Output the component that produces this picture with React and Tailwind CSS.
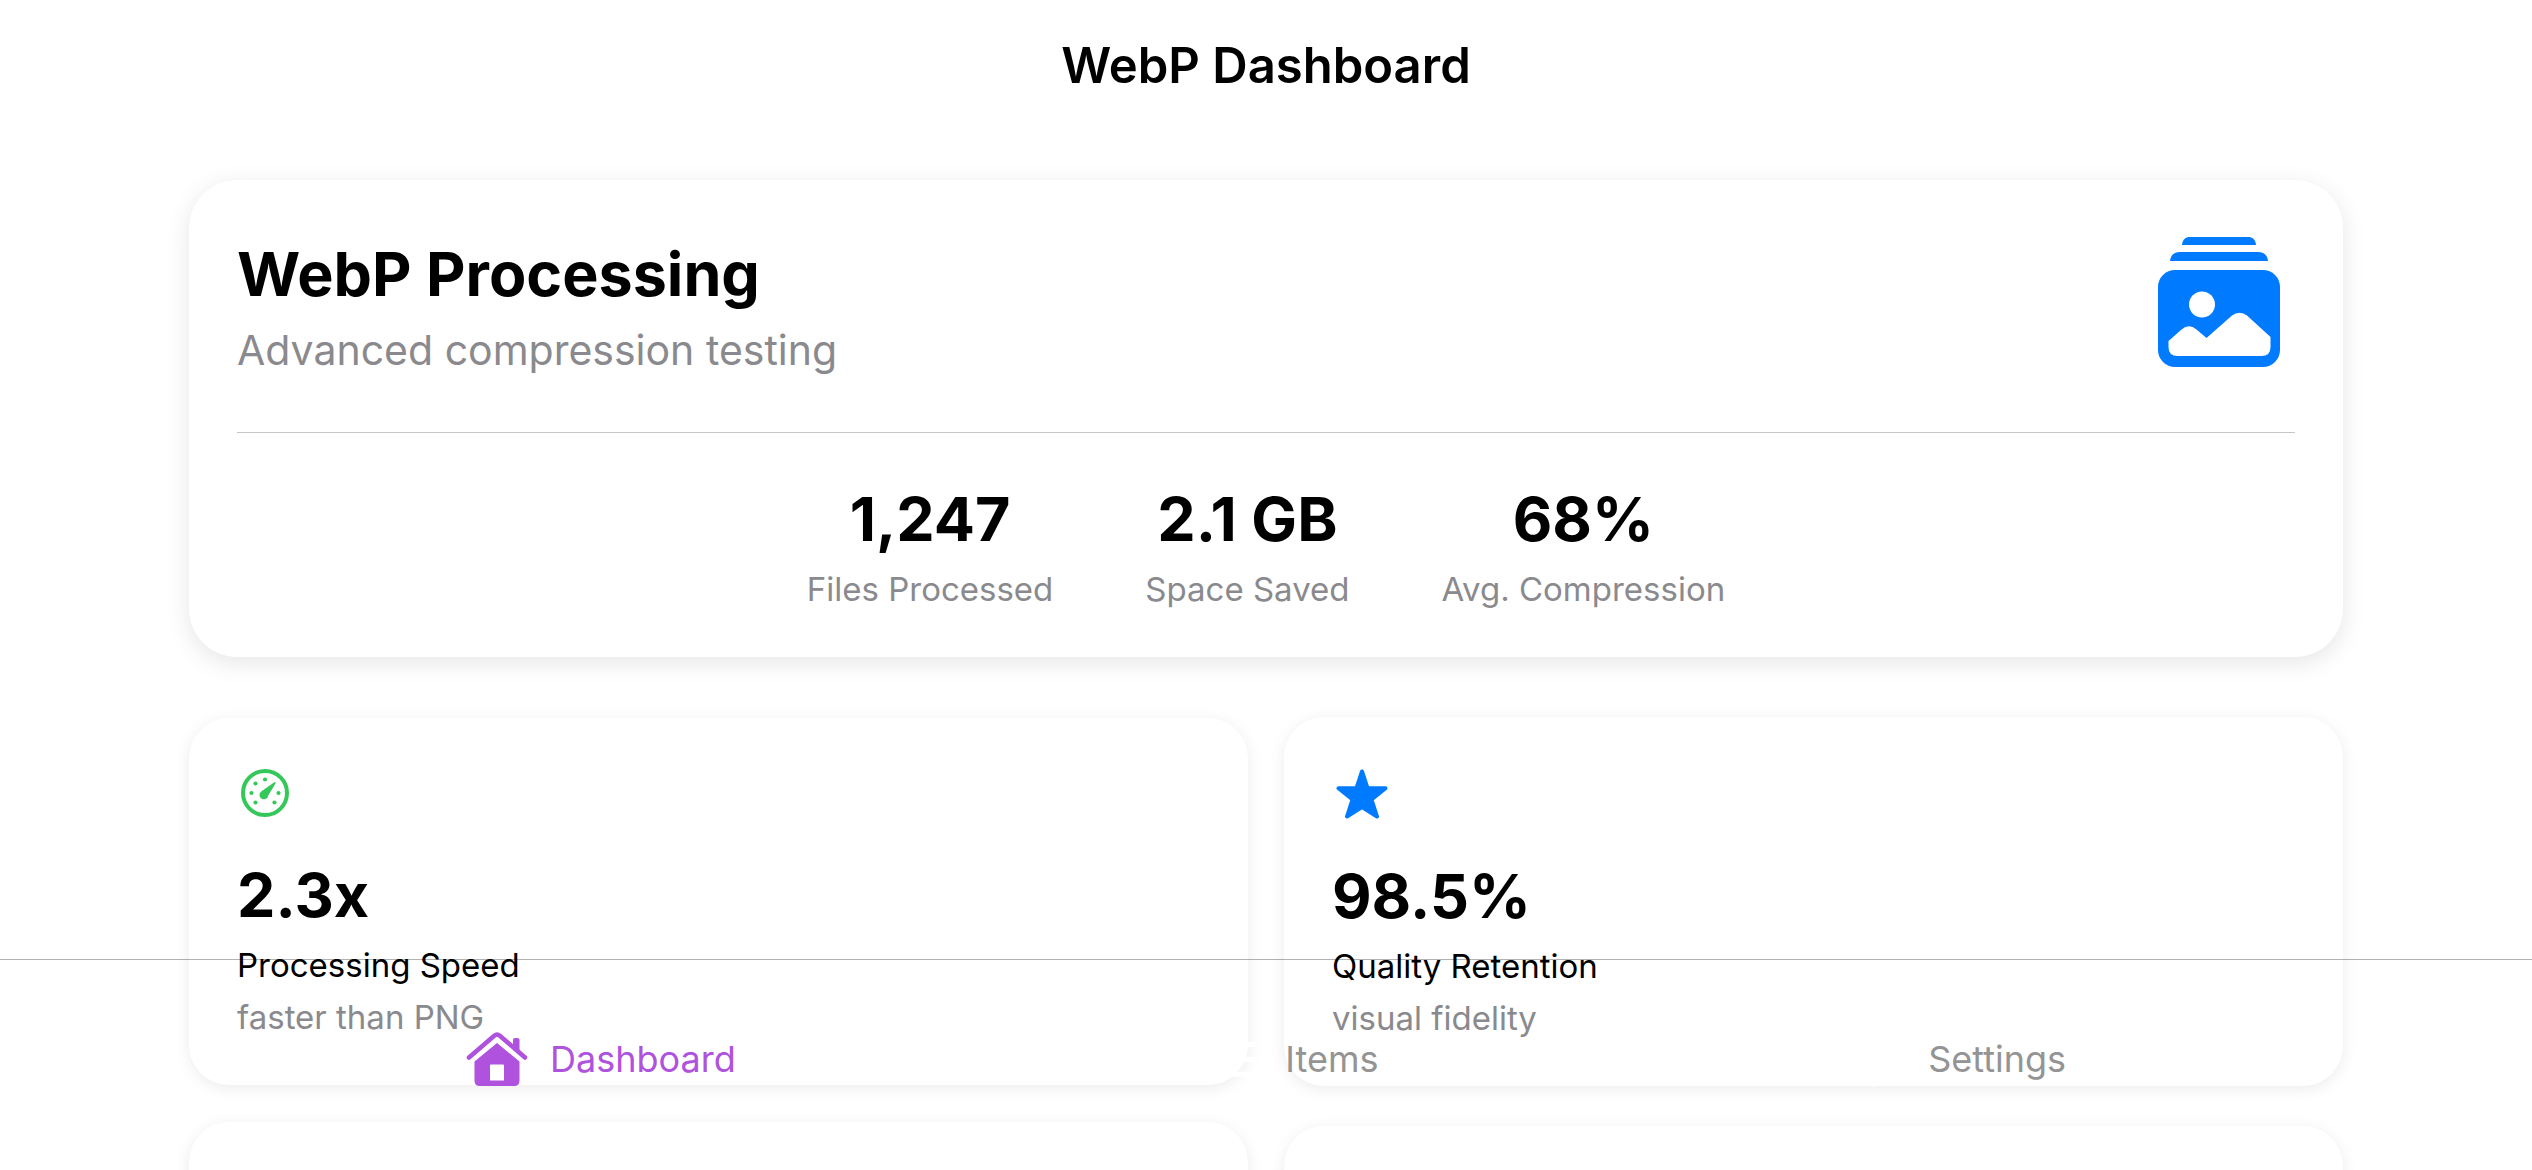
const cardShadow = 'shadow-[0_6px_24px_rgba(0,0,0,0.1)]';

function PhotoStackIcon() {
  return (
    <svg width="124" height="132" viewBox="0 0 124 132" aria-hidden="true" className="block">
      <g fill="#007aff">
        <path d="M25 9C25.500 3.500 28.500 1 33 1H91C95.500 1 98.500 3.500 99 9Z" />
        <path d="M13 25C13.500 19.500 17 16 23 16H101C107 16 110.500 19.500 111 25Z" />
        <rect x="1" y="34" width="122" height="97" rx="17" />
      </g>
      <circle cx="45" cy="68.500" r="13" fill="#fff" />
      <path d="M11.500 105L24.500 93.500Q32 87 39.500 93.500L49.500 102L75 79.500Q82.500 74 90 79.500L113.500 101V111Q113.500 120 104.500 120H20.500Q11.500 120 11.500 111Z" fill="#fff" />
    </svg>
  );
}

function GaugeIcon() {
  const dots = [[24, 10.500], [14.500, 14.500], [10.500, 24], [37.500, 24], [14.500, 33.500], [33.500, 33.500]];
  return (
    <svg width="48" height="48" viewBox="0 0 48 48" aria-hidden="true" className="block" fill="#34c759">
      <circle cx="24" cy="24" r="22" fill="none" stroke="#34c759" strokeWidth="4" />
      {dots.map(([x, y]) => (
        <circle key={`${x}-${y}`} cx={x} cy={y} r="2.100" />
      ))}
      <path d="M33.300 13.200Q35 12.600 34.500 14.400L27.200 26.400A4.400 4.400 0 1 1 20.200 22.400Z" />
    </svg>
  );
}

function StarIcon() {
  return (
    <svg width="52" height="50" viewBox="0 0 52 50" aria-hidden="true" className="block">
      <path
        d="M26 2.500L31.500 19.200H49.500L35.500 30.500L41 47.500L26 38L11 47.500L16.500 30.500L2.500 19.200H20.500Z"
        fill="#007aff"
        stroke="#007aff"
        strokeWidth="4"
        strokeLinejoin="round"
      />
    </svg>
  );
}

function HouseIcon() {
  return (
    <svg width="62" height="54" viewBox="0 0 62 54" aria-hidden="true" className="block">
      <path d="M3 25.500L28.500 3.500Q31 1.500 33.500 3.500L59 25.500" fill="none" stroke="#af52de" strokeWidth="4.500" strokeLinecap="round" />
      <path d="M47 18V8Q47 6 49 6H51.500Q53.500 6 53.500 8V22Z" fill="#af52de" />
      <path
        fillRule="evenodd"
        d="M31 11L53.500 29.500V48.500Q53.500 54 48 54H14Q8.500 54 8.500 48.500V29.500ZM25 32.500Q24 32.500 24 33.500V48.500H38V33.500Q38 32.500 37 32.500Z"
        fill="#af52de"
      />
    </svg>
  );
}

function ListIcon() {
  return (
    <svg width="62" height="54" viewBox="0 0 62 54" aria-hidden="true" className="block" fill="none" stroke="#fff" strokeWidth="5" strokeLinecap="round">
      <path d="M20 12.500H54M20 27.500H54M20 42.500H54M6 12.500H8M6 27.500H8M6 42.500H8" />
    </svg>
  );
}

function GearIcon() {
  return (
    <svg width="62" height="54" viewBox="0 0 62 54" aria-hidden="true" className="block overflow-visible" fill="none" stroke="#fff" strokeWidth="4">
      <circle cx="31" cy="27" r="21" />
      <circle cx="31" cy="27" r="7" />
      <circle cx="31" cy="27" r="25" strokeWidth="6" strokeDasharray="4 5.820" />
    </svg>
  );
}

const stats = [
  { value: '1,247', label: 'Files Processed' },
  { value: '2.1 GB', label: 'Space Saved' },
  { value: '68%', label: 'Avg. Compression' },
];

function MetricCard({ icon, value, label, note, tall }) {
  return (
    <article className={`rounded-[40px] bg-white px-12 pb-12 ${tall ? 'pt-[53px]' : 'pt-[51px]'} shadow-[0_3px_16px_rgba(0,0,0,0.08)]`}>
      <div className="flex h-12 items-center pl-1">{icon}</div>
      <p className="mt-11 text-[61px] leading-[68px] font-bold">{value}</p>
      <h3 className="mt-4 text-[33px] leading-10">{label}</h3>
      <p className="mt-3 text-[33px] leading-10 text-[#8a8a8e]">{note}</p>
    </article>
  );
}

function Tab({ icon, label, active }) {
  return (
    <button type="button" className={`flex items-center gap-[22px] text-[36px] leading-[54px] ${active ? 'text-[#af52de]' : 'text-[#949494]'}`}>
      {icon}
      {label}
    </button>
  );
}

export default function App() {
  return (
    <div className="relative h-screen overflow-hidden bg-white font-[Inter,'Liberation_Sans',sans-serif] text-black">
      <header className="flex h-[132px] items-center justify-center">
        <h1 className="text-[49px] leading-[60px] font-semibold">WebP Dashboard</h1>
      </header>

      <main className="mt-12 px-[189px]">
        <section className={`rounded-[48px] bg-white px-12 ${cardShadow}`}>
          <div className="flex items-start justify-between border-b border-[#c6c6c8] pt-[54px] pb-14">
            <div>
              <h2 className="text-[61px] leading-[80px] font-bold">WebP Processing</h2>
              <p className="mt-[10px] text-[41px] leading-[52px] text-[#8a8a8e]">Advanced compression testing</p>
            </div>
            <div className="pt-[2px] pr-[14px]">
              <PhotoStackIcon />
            </div>
          </div>
          <dl className="flex justify-center gap-[92px] pt-12 pb-12">
            {stats.map((s) => (
              <div key={s.label} className="flex flex-col-reverse items-center">
                <dt className="text-[33px] leading-10 text-[#8a8a8e]">{s.label}</dt>
                <dd className="mb-3 text-[61px] leading-[76px] font-bold">{s.value}</dd>
              </div>
            ))}
          </dl>
        </section>

        <section className="mt-[60px] grid grid-cols-2 items-center gap-9">
          <MetricCard icon={<GaugeIcon />} value="2.3x" label="Processing Speed" note="faster than PNG" />
          <MetricCard tall icon={<StarIcon />} value="98.5%" label="Quality Retention" note="visual fidelity" />
          <article className="h-[369px] rounded-[40px] bg-white shadow-[0_3px_16px_rgba(0,0,0,0.08)]" />
          <article className="h-[361px] rounded-[40px] bg-white shadow-[0_3px_16px_rgba(0,0,0,0.08)]" />
        </section>
      </main>

      <nav className="absolute inset-x-0 bottom-0 flex h-[211px] items-start justify-between border-t border-black/30 px-[466px] pt-[72px]">
        <Tab active icon={<HouseIcon />} label="Dashboard" />
        <Tab icon={<ListIcon />} label="Items" />
        <Tab icon={<GearIcon />} label="Settings" />
      </nav>
    </div>
  );
}
